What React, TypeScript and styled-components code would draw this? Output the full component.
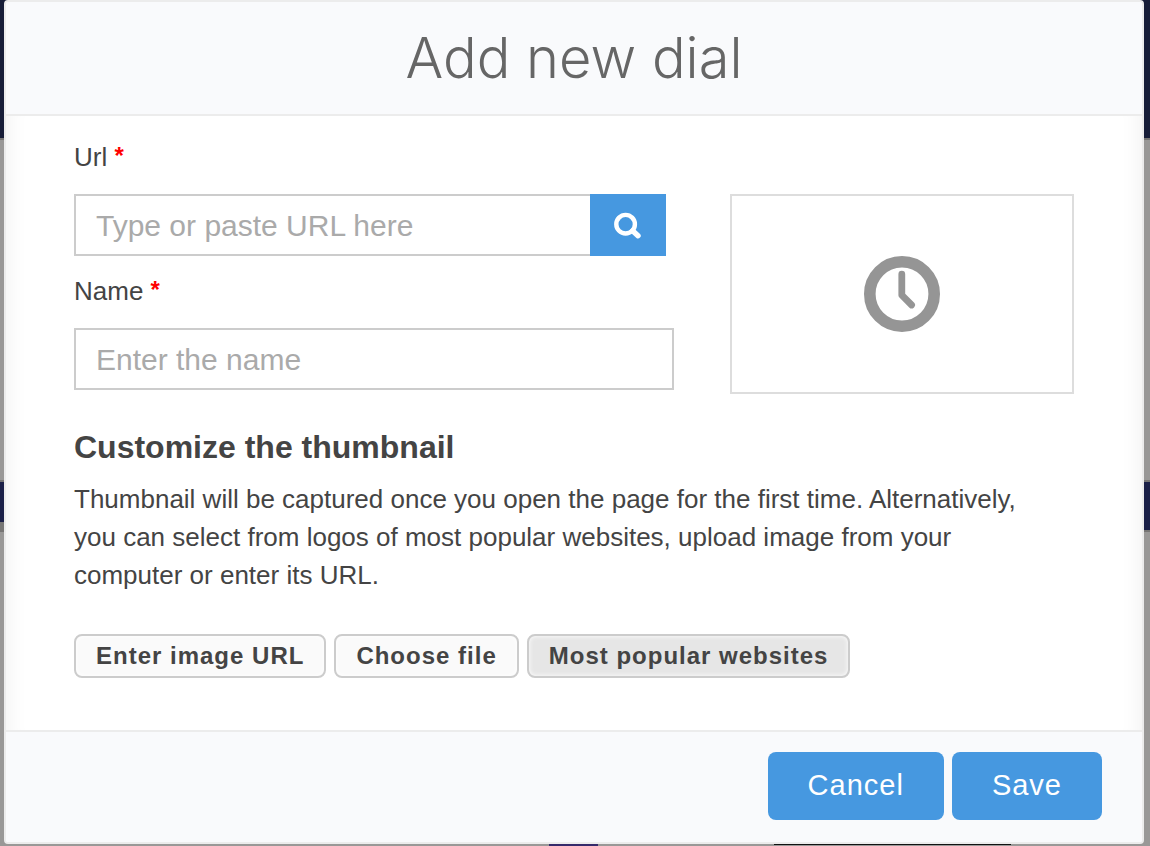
import React from "react";
import styled, { createGlobalStyle } from "styled-components";

const GlobalStyle = createGlobalStyle`
  *, *::before, *::after { box-sizing: border-box; }
  body {
    margin: 0;
    font-family: "Liberation Sans", Arial, sans-serif;
    font-size: 26px;
    line-height: 38px;
    color: #444;
  }
`;

/* Dimmed page behind the dialog: header band, middle band, and the tops of two tiles below. */
const Backdrop = styled.div`
  min-height: 100vh;
  padding: 0 6px 2px 4px;
  background:
    linear-gradient(#352a6b, #352a6b) 549px 844px / 49px 2px no-repeat,
    linear-gradient(#111, #111) 774px 844px / 237px 1px no-repeat,
    linear-gradient(#777675, #777675) 0 522px / 4px 8px no-repeat,
    linear-gradient(
      #171d38 138px,
      #767574 138px 140px,
      #999897 140px 480px,
      #777675 480px 482px,
      #1b2048 482px 530px,
      #777675 530px 532px,
      #999897 532px
    );
`;

const Dialog = styled.form`
  display: flex;
  flex-direction: column;
  border: 2px solid #ececec;
  border-radius: 4px;
  background: #fff;
  overflow: hidden;
`;

const Header = styled.header`
  padding: 24px 40px;
  border-bottom: 2px solid #ececec;
  background: #f9fafc;
  text-align: center;
`;

const Title = styled.h1`
  margin: 0;
  font-family: Inter, "Liberation Sans", sans-serif;
  font-size: 56px;
  line-height: 64px;
  font-weight: 300;
  color: #666;
`;

const Body = styled.div`
  padding: 22px 68px 52px;
  box-shadow: inset 24px 0 20px -20px #f3f3f3, inset -24px 0 20px -20px #f3f3f3;
`;

const Columns = styled.div`
  display: flex;
  justify-content: space-between;
  align-items: flex-end;
  margin-bottom: 34px;
`;

const Fields = styled.div`
  width: 60%;
  display: flex;
  flex-direction: column;
  gap: 16px;
  margin-bottom: 4px;
`;

const Field = styled.div`
  display: flex;
  flex-direction: column;
  gap: 18px;
`;

const Required = styled.span`
  font-size: 24px;
  line-height: 24px;
  font-weight: 700;
  vertical-align: 2px;
  color: #f00;
`;

const InputGroup = styled.div`
  display: flex;
  margin-right: 8px;
`;

const TextInput = styled.input<{ $joined?: boolean }>`
  flex: 1;
  min-width: 0;
  height: 62px;
  flex-basis: ${(p) => (p.$joined ? "0" : "62px")};
  padding: 2px 20px 0;
  border: 2px solid #ccc;
  border-right-width: ${(p) => (p.$joined ? "0" : "2px")};
  border-radius: 0;
  background: #fff;
  font: inherit;
  font-size: 30px;
  color: #444;
  &::placeholder { color: #aaa; opacity: 1; }
`;

const SearchButton = styled.button`
  display: flex;
  align-items: center;
  justify-content: center;
  width: 76px;
  height: 62px;
  padding: 0;
  border: 0;
  background: #4698e0;
`;

const Preview = styled.div`
  display: flex;
  align-items: center;
  justify-content: center;
  width: 344px;
  height: 200px;
  border: 2px solid #ddd;
  background: #fff;
`;

const SectionTitle = styled.h2`
  margin: 0 0 14px;
  font-size: 32px;
  line-height: 38px;
  font-weight: 700;
`;

const Description = styled.p`
  max-width: 970px;
  margin: 0 0 40px;
`;

const ButtonRow = styled.div<{ $end?: boolean }>`
  display: flex;
  gap: 8px;
  justify-content: ${(p) => (p.$end ? "flex-end" : "flex-start")};
`;

const OptionButton = styled.button<{ $active?: boolean }>`
  height: 44px;
  padding: 0 20px;
  border: 2px solid #ccc;
  border-radius: 8px;
  background: ${(p) => (p.$active ? "#e6e6e6" : "#fafafa")};
  box-shadow: inset 0 0 5px #fff;
  font: inherit;
  font-size: 24px;
  line-height: 38px;
  font-weight: 700;
  letter-spacing: 1px;
  color: #444;
`;

const Footer = styled.footer`
  padding: 20px 40px 22px;
  border-top: 2px solid #ececec;
  background: #f9fafc;
`;

const ActionButton = styled.button`
  height: 68px;
  padding: 0 40px 2px;
  border: 0;
  border-radius: 8px;
  background: #4698e0;
  font: inherit;
  font-size: 29px;
  letter-spacing: 1px;
  color: #fff;
`;

const SearchIcon = () => (
  <svg width="28" height="28" viewBox="0 0 28 28" fill="none" stroke="#fff" aria-hidden="true">
    <circle cx="11.6" cy="13.2" r="9.3" strokeWidth="4.4" />
    <path d="M18.6 19.8 24 24.7" strokeWidth="5.4" strokeLinecap="round" />
  </svg>
);

const ClockIcon = () => (
  <svg width="78" height="78" viewBox="0 0 78 78" fill="none" stroke="#959595" aria-hidden="true">
    <circle cx="39" cy="39" r="32.2" strokeWidth="11.6" />
    <path d="M38.8 19.2V40.2L48.6 50" strokeWidth="6.8" strokeLinecap="round" strokeLinejoin="round" />
  </svg>
);

export default function App() {
  return (
    <Backdrop>
      <GlobalStyle />
      <Dialog role="dialog" aria-labelledby="dialog-title" onSubmit={(e) => e.preventDefault()}>
        <Header>
          <Title id="dialog-title">Add new dial</Title>
        </Header>
        <Body>
          <Columns>
            <Fields>
              <Field>
                <label htmlFor="url">
                  Url <Required>*</Required>
                </label>
                <InputGroup>
                  <TextInput $joined id="url" type="text" placeholder="Type or paste URL here" />
                  <SearchButton type="button" aria-label="Search">
                    <SearchIcon />
                  </SearchButton>
                </InputGroup>
              </Field>
              <Field>
                <label htmlFor="name">
                  Name <Required>*</Required>
                </label>
                <TextInput id="name" type="text" placeholder="Enter the name" />
              </Field>
            </Fields>
            <Preview>
              <ClockIcon />
            </Preview>
          </Columns>
          <SectionTitle>Customize the thumbnail</SectionTitle>
          <Description>
            Thumbnail will be captured once you open the page for the first time. Alternatively,
            you can select from logos of most popular websites, upload image from your computer or
            enter its URL.
          </Description>
          <ButtonRow>
            <OptionButton type="button">Enter image URL</OptionButton>
            <OptionButton type="button">Choose file</OptionButton>
            <OptionButton type="button" $active>Most popular websites</OptionButton>
          </ButtonRow>
        </Body>
        <Footer>
          <ButtonRow $end>
            <ActionButton type="button">Cancel</ActionButton>
            <ActionButton type="submit">Save</ActionButton>
          </ButtonRow>
        </Footer>
      </Dialog>
    </Backdrop>
  );
}
